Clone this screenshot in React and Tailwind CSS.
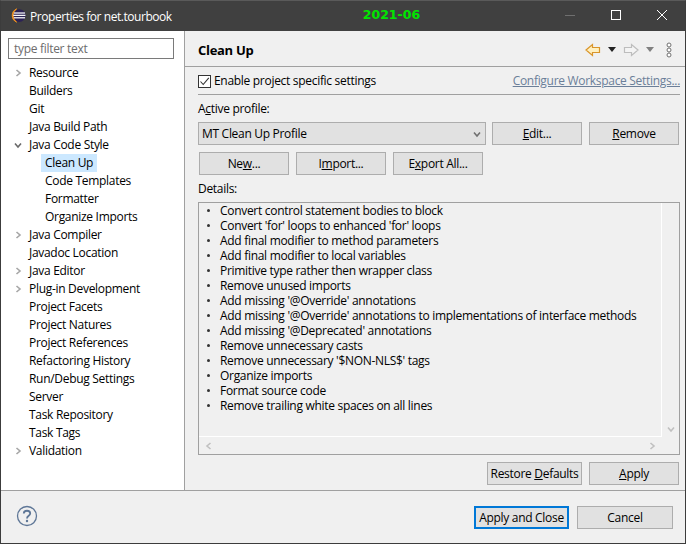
import React from "react";

const tree = [
  ["Resource", 0, "r"], ["Builders", 0], ["Git", 0], ["Java Build Path", 0],
  ["Java Code Style", 0, "d"], ["Clean Up", 1, null, true], ["Code Templates", 1], ["Formatter", 1], ["Organize Imports", 1],
  ["Java Compiler", 0, "r"], ["Javadoc Location", 0], ["Java Editor", 0, "r"], ["Plug-in Development", 0, "r"],
  ["Project Facets", 0], ["Project Natures", 0], ["Project References", 0], ["Refactoring History", 0],
  ["Run/Debug Settings", 0], ["Server", 0], ["Task Repository", 0], ["Task Tags", 0], ["Validation", 0, "r"],
];

const details = [
  "Convert control statement bodies to block",
  "Convert 'for' loops to enhanced 'for' loops",
  "Add final modifier to method parameters",
  "Add final modifier to local variables",
  "Primitive type rather then wrapper class",
  "Remove unused imports",
  "Add missing '@Override' annotations",
  "Add missing '@Override' annotations to implementations of interface methods",
  "Add missing '@Deprecated' annotations",
  "Remove unnecessary casts",
  "Remove unnecessary '$NON-NLS$' tags",
  "Organize imports",
  "Format source code",
  "Remove trailing white spaces on all lines",
];

function Chevron({ dir, color = "#a6a6a6", size = 8 }) {
  const d = { r: "M2.5 1 L6 4 L2.5 7", d: "M1 2.5 L4 6 L7 2.5", l: "M5.5 1 L2 4 L5.5 7" }[dir];
  return (
    <svg width={size} height={size} viewBox="0 0 8 8" className="block">
      <path d={d} fill="none" stroke={color} strokeWidth="1.6" />
    </svg>
  );
}

function Btn({ className = "", children }) {
  return (
    <div className={`h-[23px] flex items-center justify-center bg-[#e1e1e1] border border-[#adadad] text-[12px] text-black ${className}`}>
      <span>{children}</span>
    </div>
  );
}

export default function App() {
  return (
    <div className="w-[686px] h-[544px] flex flex-col border border-[#3c3c3c] border-t-[#5a5a5a] bg-[#f0f0f0] text-black overflow-hidden text-[12px] font-['Open_Sans','Noto_Sans',sans-serif] tracking-[-0.3px]">
      {/* Title bar */}
      <div className="h-[30px] shrink-0 bg-[#404040] flex items-center pl-[10px] text-white">
        <svg width="15" height="15" viewBox="0 0 16 16" className="shrink-0 -mt-[1px]">
          <circle cx="8.8" cy="8" r="6.8" fill="#2c2255" />
          <path d="M6 1 A7.6 7.6 0 0 0 6 15 A8.4 8.4 0 0 1 6 1 Z" fill="#f7941e" stroke="#f7941e" strokeWidth="1" />
          <rect x="3" y="4.7" width="12" height="1.3" fill="#ffffff" />
          <rect x="2.4" y="7.2" width="13" height="1.3" fill="#ffffff" />
          <rect x="3" y="9.8" width="12" height="1.3" fill="#ffffff" />
        </svg>
        <div className="ml-[4px] w-[305px] whitespace-nowrap text-[12px] mt-[1px] tracking-[-0.45px]">Properties for net.tourbook</div>
        <div className="w-[191px] text-[#00e600] font-bold text-[12.5px] font-['DejaVu_Sans',sans-serif] tracking-normal whitespace-nowrap -mt-[2px] ml-[37px]">2021-06</div>
        <div className="flex items-center ml-[-1px]">
          <svg width="46" height="30" viewBox="0 0 46 30" className="block"><path d="M18 14.5 H28" stroke="#6f6f6f" strokeWidth="1" /></svg>
          <svg width="46" height="30" viewBox="0 0 46 30" className="block"><rect x="18.5" y="9.5" width="9" height="9" fill="none" stroke="#fff" strokeWidth="1" /></svg>
          <svg width="46" height="30" viewBox="0 0 46 30" className="block"><path d="M18 9 L28 19 M28 9 L18 19" stroke="#fff" strokeWidth="1" /></svg>
        </div>
      </div>

      {/* Body */}
      <div className="flex flex-1 min-h-0">
        {/* Left panel */}
        <div className="w-[184px] shrink-0 bg-white border-r border-[#a0a0a0] pt-[7px] flex flex-col">
          <div className="mx-[7px] w-[166px] h-[21px] border border-[#7a7a7a] flex items-center pl-[5px] text-[#6d6d6d] bg-white">type filter text</div>
          <div className="mt-[5px] flex flex-col">
            {tree.map(([label, level, arrow, sel]) => (
              <div key={label} className="h-[18px] flex items-center whitespace-nowrap">
                {level === 0 ? (
                  <div className="w-[28px] flex justify-end pr-[2px] shrink-0">
                    <div className="w-[8px] h-[8px] mr-[5px]">{arrow && <Chevron dir={arrow} color={arrow === "d" ? "#6a6a6a" : "#a6a6a6"} />}</div>
                  </div>
                ) : (
                  <div className="w-[40px] shrink-0" />
                )}
                <span className={sel ? "bg-[#cce8ff] h-[18px] flex items-center px-[4px]" : level === 1 ? "px-[4px]" : ""}>{label}</span>
              </div>
            ))}
          </div>
        </div>

        {/* Right panel */}
        <div className="flex-1 min-w-0 flex flex-col bg-[#f0f0f0]">
          <div className="h-[36px] shrink-0 flex items-center pl-[13px] pr-[13px] pt-[2px] border-b border-[#a0a0a0]">
            <span className="font-bold text-[13px] mt-[3px]">Clean Up</span>
            <div className="ml-auto flex items-center">
              <svg width="16" height="14" viewBox="0 0 16 14" className="block">
                <path d="M1 7 L7.5 1.5 V4.5 H14.5 V9.5 H7.5 V12.5 Z" fill="#fff0c0" stroke="#d9952a" strokeWidth="1.2" />
              </svg>
              <svg width="8" height="5" viewBox="0 0 8 5" className="block ml-[7px]"><path d="M0 0 H8 L4 5 Z" fill="#222" /></svg>
              <svg width="16" height="14" viewBox="0 0 16 14" className="block ml-[7px]">
                <path d="M15 7 L8.5 1.5 V4.5 H1.5 V9.5 H8.5 V12.5 Z" fill="#f4f4f4" stroke="#bdbdbd" strokeWidth="1.2" />
              </svg>
              <svg width="8" height="5" viewBox="0 0 8 5" className="block ml-[7px]"><path d="M0 0 H8 L4 5 Z" fill="#808080" /></svg>
              <svg width="6" height="16" viewBox="0 0 6 16" className="block ml-[12px]">
                <circle cx="3" cy="3" r="2" fill="#fff" stroke="#707070" />
                <circle cx="3" cy="8" r="2" fill="#fff" stroke="#707070" />
                <circle cx="3" cy="13" r="2" fill="#fff" stroke="#707070" />
              </svg>
            </div>
          </div>

          <div className="flex-1 min-h-0 flex flex-col pl-[13px] pr-[5px]">
            <div className="h-[28px] shrink-0 flex items-center pt-[1px] border-b border-[#a0a0a0]">
              <div className="w-[13px] h-[13px] border border-[#333] bg-white flex items-center justify-center mr-[3px]">
                <svg width="11" height="11" viewBox="0 0 11 11" className="block"><path d="M1.5 5.5 L4.2 8.5 L9.8 1.8" fill="none" stroke="#333" strokeWidth="1.1" /></svg>
              </div>
              <span>Enable pro<u>j</u>ect specific settings</span>
              <span className="ml-auto underline text-[#6b7f99] whitespace-nowrap">Configure Workspace Settings...</span>
            </div>

            <div className="mt-[6px] h-[16px] flex items-center"><span>A<u>c</u>tive profile:</span></div>
            <div className="mt-[5px] flex">
              <div className="w-[288px] h-[23px] bg-[#e1e1e1] border border-[#adadad] flex items-center pl-[3px] pr-[4px]">
                <span>MT Clean Up Profile</span>
                <div className="ml-auto"><Chevron dir="d" color="#707070" /></div>
              </div>
              <Btn className="w-[90px] ml-[6px]"><u>E</u>dit...</Btn>
              <Btn className="w-[90px] ml-[7px]"><u>R</u>emove</Btn>
            </div>
            <div className="mt-[7px] flex ml-[1px]">
              <Btn className="w-[90px]">Ne<u>w</u>...</Btn>
              <Btn className="w-[90px] ml-[7px]">I<u>m</u>port...</Btn>
              <Btn className="w-[90px] ml-[7px]">E<u>x</u>port All...</Btn>
            </div>
            <div className="mt-[6px] h-[16px] flex items-center">Details:</div>
            <div className="mt-[5px] h-[253px] w-[482px] border border-[#a0a0a0] flex flex-col">
              <div className="flex-1 min-h-0 flex">
                <div className="flex-1 bg-[#f0f0f0] pl-[7px] border-r border-b border-white leading-[15px]">
                  {details.map((t) => (
                    <div key={t} className="h-[15px] flex items-center whitespace-nowrap">
                      <span className="w-[14px] shrink-0 flex"><span className="w-[3px] h-[3px] rounded-full bg-[#333] ml-[1px]" /></span>
                      <span>{t}</span>
                    </div>
                  ))}
                </div>
                <div className="w-[17px] shrink-0 flex items-end justify-center pb-[4px]"><Chevron dir="d" color="#c0c0c0" /></div>
              </div>
              <div className="h-[17px] shrink-0 flex items-center pl-[6px] pr-[23px]">
                <Chevron dir="l" color="#c0c0c0" />
                <div className="ml-auto"><Chevron dir="r" color="#c0c0c0" /></div>
              </div>
            </div>
            <div className="mt-[7px] flex justify-end pr-[1px]">
              <Btn className="w-[95px]">Restore <u>D</u>efaults</Btn>
              <Btn className="w-[90px] ml-[7px]"><u>A</u>pply</Btn>
            </div>
          </div>
        </div>
      </div>

      {/* Footer */}
      <div className="h-[53px] shrink-0 border-t border-[#a0a0a0] flex items-start pl-[15px] pr-[12px] pt-[15px]">
        <svg width="22" height="22" viewBox="0 0 22 22" className="block -mt-[1px]">
          <circle cx="11" cy="11" r="9.5" fill="none" stroke="#5f7797" strokeWidth="1.3" />
          <path d="M7.8 8.5 C7.8 4.8 14.2 4.8 14.2 8.5 C14.2 11 11 10.6 11 13.5" fill="none" stroke="#5f7797" strokeWidth="1.8" />
          <circle cx="11" cy="16" r="1.2" fill="#5f7797" />
        </svg>
        <div className="ml-auto flex">
          <div className="w-[95px] h-[23px] flex items-center justify-center bg-[#e1e1e1] border-2 border-[#0078d7]">Apply and Close</div>
          <Btn className="w-[96px] ml-[8px]">Cancel</Btn>
        </div>
      </div>
    </div>
  );
}
